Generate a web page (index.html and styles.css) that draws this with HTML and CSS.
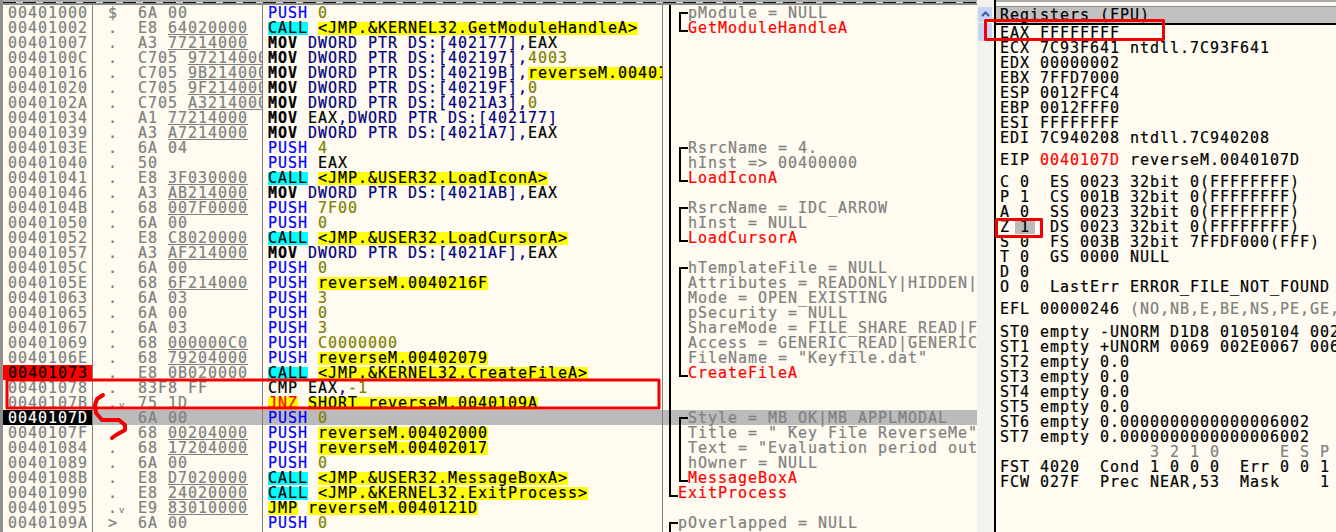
FILE: index.html
```html
<!DOCTYPE html>
<html lang="en">
  <head>
    <meta charset="utf-8" />
    <meta name="viewport" content="width=device-width, initial-scale=1.0" />
    <title>CPU - main thread</title>
    <link rel="stylesheet" href="styles.css">
  </head>
  <body>
    <div class="window">
      <section class="cpu">
        <div class="strip"></div>
        <div class="row"><div class="addr">00401000</div><div class="hex"><span class="mark">$</span>6A 00</div><div class="dis"><span class="push">PUSH</span> <span class="num">0</span></div><div class="note"><i class="g g-l"></i><i class="g g-t"></i><span>pModule = NULL</span></div></div>
        <div class="row"><div class="addr">00401002</div><div class="hex"><span class="mark">.</span>E8 <span class="ref">64020000</span></div><div class="dis"><span class="hl call">CALL</span> <span class="hl api">&lt;JMP.&amp;KERNEL32.GetModuleHandleA&gt;</span></div><div class="note"><i class="g g-l"></i><i class="g g-e"></i><span class="fn">GetModuleHandleA</span></div></div>
        <div class="row"><div class="addr">00401007</div><div class="hex"><span class="mark">.</span>A3 <span class="ref">77214000</span></div><div class="dis"><b>MOV</b> <span class="mem">DWORD PTR DS:[402177],</span>EAX</div><div class="note"><i class="g g-l"></i></div></div>
        <div class="row"><div class="addr">0040100C</div><div class="hex"><span class="mark">.</span>C705 <span class="ref">97214000</span></div><div class="dis"><b>MOV</b> <span class="mem">DWORD PTR DS:[402197],</span><span class="num">4003</span></div><div class="note"><i class="g g-l"></i></div></div>
        <div class="row"><div class="addr">00401016</div><div class="hex"><span class="mark">.</span>C705 <span class="ref">9B214000</span></div><div class="dis"><b>MOV</b> <span class="mem">DWORD PTR DS:[40219B],</span><span class="hl api">reverseM.00401046</span></div><div class="note"><i class="g g-l"></i></div></div>
        <div class="row"><div class="addr">00401020</div><div class="hex"><span class="mark">.</span>C705 <span class="ref">9F214000</span></div><div class="dis"><b>MOV</b> <span class="mem">DWORD PTR DS:[40219F],</span><span class="num">0</span></div><div class="note"><i class="g g-l"></i></div></div>
        <div class="row"><div class="addr">0040102A</div><div class="hex"><span class="mark">.</span>C705 <span class="ref">A3214000</span></div><div class="dis"><b>MOV</b> <span class="mem">DWORD PTR DS:[4021A3],</span><span class="num">0</span></div><div class="note"><i class="g g-l"></i></div></div>
        <div class="row"><div class="addr">00401034</div><div class="hex"><span class="mark">.</span>A1 <span class="ref">77214000</span></div><div class="dis"><b>MOV</b> EAX<span class="mem">,DWORD PTR DS:[402177]</span></div><div class="note"><i class="g g-l"></i></div></div>
        <div class="row"><div class="addr">00401039</div><div class="hex"><span class="mark">.</span>A3 <span class="ref">A7214000</span></div><div class="dis"><b>MOV</b> <span class="mem">DWORD PTR DS:[4021A7],</span>EAX</div><div class="note"><i class="g g-l"></i></div></div>
        <div class="row"><div class="addr">0040103E</div><div class="hex"><span class="mark">.</span>6A 04</div><div class="dis"><span class="push">PUSH</span> <span class="num">4</span></div><div class="note"><i class="g g-l"></i><i class="g g-t"></i><span>RsrcName = 4.</span></div></div>
        <div class="row"><div class="addr">00401040</div><div class="hex"><span class="mark">.</span>50</div><div class="dis"><span class="push">PUSH</span> EAX</div><div class="note"><i class="g g-l"></i><i class="g g-l"></i><span>hInst =&gt; 00400000</span></div></div>
        <div class="row"><div class="addr">00401041</div><div class="hex"><span class="mark">.</span>E8 <span class="ref">3F030000</span></div><div class="dis"><span class="hl call">CALL</span> <span class="hl api">&lt;JMP.&amp;USER32.LoadIconA&gt;</span></div><div class="note"><i class="g g-l"></i><i class="g g-e"></i><span class="fn">LoadIconA</span></div></div>
        <div class="row"><div class="addr">00401046</div><div class="hex"><span class="mark">.</span>A3 <span class="ref">AB214000</span></div><div class="dis"><b>MOV</b> <span class="mem">DWORD PTR DS:[4021AB],</span>EAX</div><div class="note"><i class="g g-l"></i></div></div>
        <div class="row"><div class="addr">0040104B</div><div class="hex"><span class="mark">.</span>68 <span class="ref">007F0000</span></div><div class="dis"><span class="push">PUSH</span> <span class="num">7F00</span></div><div class="note"><i class="g g-l"></i><i class="g g-t"></i><span>RsrcName = IDC_ARROW</span></div></div>
        <div class="row"><div class="addr">00401050</div><div class="hex"><span class="mark">.</span>6A 00</div><div class="dis"><span class="push">PUSH</span> <span class="num">0</span></div><div class="note"><i class="g g-l"></i><i class="g g-l"></i><span>hInst = NULL</span></div></div>
        <div class="row"><div class="addr">00401052</div><div class="hex"><span class="mark">.</span>E8 <span class="ref">C8020000</span></div><div class="dis"><span class="hl call">CALL</span> <span class="hl api">&lt;JMP.&amp;USER32.LoadCursorA&gt;</span></div><div class="note"><i class="g g-l"></i><i class="g g-e"></i><span class="fn">LoadCursorA</span></div></div>
        <div class="row"><div class="addr">00401057</div><div class="hex"><span class="mark">.</span>A3 <span class="ref">AF214000</span></div><div class="dis"><b>MOV</b> <span class="mem">DWORD PTR DS:[4021AF],</span>EAX</div><div class="note"><i class="g g-l"></i></div></div>
        <div class="row"><div class="addr">0040105C</div><div class="hex"><span class="mark">.</span>6A 00</div><div class="dis"><span class="push">PUSH</span> <span class="num">0</span></div><div class="note"><i class="g g-l"></i><i class="g g-t"></i><span>hTemplateFile = NULL</span></div></div>
        <div class="row"><div class="addr">0040105E</div><div class="hex"><span class="mark">.</span>68 <span class="ref">6F214000</span></div><div class="dis"><span class="push">PUSH</span> <span class="hl api">reverseM.0040216F</span></div><div class="note"><i class="g g-l"></i><i class="g g-l"></i><span>Attributes = READONLY|HIDDEN|SYSTEM</span></div></div>
        <div class="row"><div class="addr">00401063</div><div class="hex"><span class="mark">.</span>6A 03</div><div class="dis"><span class="push">PUSH</span> <span class="num">3</span></div><div class="note"><i class="g g-l"></i><i class="g g-l"></i><span>Mode = OPEN_EXISTING</span></div></div>
        <div class="row"><div class="addr">00401065</div><div class="hex"><span class="mark">.</span>6A 00</div><div class="dis"><span class="push">PUSH</span> <span class="num">0</span></div><div class="note"><i class="g g-l"></i><i class="g g-l"></i><span>pSecurity = NULL</span></div></div>
        <div class="row"><div class="addr">00401067</div><div class="hex"><span class="mark">.</span>6A 03</div><div class="dis"><span class="push">PUSH</span> <span class="num">3</span></div><div class="note"><i class="g g-l"></i><i class="g g-l"></i><span>ShareMode = FILE_SHARE_READ|FILE_SHARE_WRITE</span></div></div>
        <div class="row"><div class="addr">00401069</div><div class="hex"><span class="mark">.</span>68 <span class="ref">000000C0</span></div><div class="dis"><span class="push">PUSH</span> <span class="num">C0000000</span></div><div class="note"><i class="g g-l"></i><i class="g g-l"></i><span>Access = GENERIC_READ|GENERIC_WRITE</span></div></div>
        <div class="row"><div class="addr">0040106E</div><div class="hex"><span class="mark">.</span>68 <span class="ref">79204000</span></div><div class="dis"><span class="push">PUSH</span> <span class="hl api">reverseM.00402079</span></div><div class="note"><i class="g g-l"></i><i class="g g-l"></i><span>FileName = "Keyfile.dat"</span></div></div>
        <div class="row"><div class="addr addr-break">00401073</div><div class="hex"><span class="mark">.</span>E8 <span class="ref">0B020000</span></div><div class="dis"><span class="hl call">CALL</span> <span class="hl api">&lt;JMP.&amp;KERNEL32.CreateFileA&gt;</span></div><div class="note"><i class="g g-l"></i><i class="g g-e"></i><span class="fn">CreateFileA</span></div></div>
        <div class="row"><div class="addr">00401078</div><div class="hex"><span class="mark">.</span>83F8 FF</div><div class="dis">CMP EAX<span class="mem">,</span><span class="num">-1</span></div><div class="note"><i class="g g-l"></i></div></div>
        <div class="row"><div class="addr">0040107B</div><div class="hex"><span class="mark">.<small>v</small></span>75 1D</div><div class="dis"><span class="hl jump">JNZ</span> <span class="hl api">SHORT reverseM.0040109A</span></div><div class="note"><i class="g g-l"></i></div></div>
        <div class="row row-now"><div class="addr addr-now">0040107D</div><div class="hex"><span class="mark"></span>6A 00</div><div class="dis"><span class="push">PUSH</span> <span class="num">0</span></div><div class="note"><i class="g g-l"></i><i class="g g-t"></i><span>Style = MB_OK|MB_APPLMODAL</span></div></div>
        <div class="row"><div class="addr">0040107F</div><div class="hex"><span class="mark"></span>68 <span class="ref">00204000</span></div><div class="dis"><span class="push">PUSH</span> <span class="hl api">reverseM.00402000</span></div><div class="note"><i class="g g-l"></i><i class="g g-l"></i><span>Title = " Key File ReverseMe"</span></div></div>
        <div class="row"><div class="addr">00401084</div><div class="hex"><span class="mark">.</span>68 <span class="ref">17204000</span></div><div class="dis"><span class="push">PUSH</span> <span class="hl api">reverseM.00402017</span></div><div class="note"><i class="g g-l"></i><i class="g g-l"></i><span>Text = "Evaluation period out of date."</span></div></div>
        <div class="row"><div class="addr">00401089</div><div class="hex"><span class="mark">.</span>6A 00</div><div class="dis"><span class="push">PUSH</span> <span class="num">0</span></div><div class="note"><i class="g g-l"></i><i class="g g-l"></i><span>hOwner = NULL</span></div></div>
        <div class="row"><div class="addr">0040108B</div><div class="hex"><span class="mark">.</span>E8 <span class="ref">D7020000</span></div><div class="dis"><span class="hl call">CALL</span> <span class="hl api">&lt;JMP.&amp;USER32.MessageBoxA&gt;</span></div><div class="note"><i class="g g-l"></i><i class="g g-e"></i><span class="fn">MessageBoxA</span></div></div>
        <div class="row"><div class="addr">00401090</div><div class="hex"><span class="mark">.</span>E8 <span class="ref">24020000</span></div><div class="dis"><span class="hl call">CALL</span> <span class="hl api">&lt;JMP.&amp;KERNEL32.ExitProcess&gt;</span></div><div class="note"><i class="g g-e"></i><span class="fn">ExitProcess</span></div></div>
        <div class="row"><div class="addr">00401095</div><div class="hex"><span class="mark">.<small>v</small></span>E9 <span class="ref">83010000</span></div><div class="dis"><span class="hl jump-plain">JMP</span> <span class="hl api">reverseM.0040121D</span></div><div class="note"></div></div>
        <div class="row"><div class="addr">0040109A</div><div class="hex"><span class="mark">&gt;</span>6A 00</div><div class="dis"><span class="push">PUSH</span> <span class="num">0</span></div><div class="note"><i class="g g-t"></i><span>pOverlapped = NULL</span></div></div>
        <!-- next row is cut off by the window, only its top edge shows -->
        <div class="row"><div class="addr"></div><div class="hex"></div><div class="dis"><span class="spacer"></span><span class="hl api stub"></span></div><div class="note"><i class="g g-l"></i></div></div>
      </section>

      <div class="scrollbar">
        <div class="scroll-btn">
          <svg width="15" height="15" viewBox="0 0 15 15"><path d="M4 9 L7.5 5.5 L11 9" fill="none" stroke="#3d5a9e" stroke-width="2" /></svg>
        </div>
        <div class="scroll-thumb"></div>
      </div>

      <section class="regs">
        <div class="regs-strip"></div>
        <h2 class="regs-head">Registers (FPU)</h2>
        <div class="group">
          <div class="line">EAX FFFFFFFF</div>
          <div class="line">ECX 7C93F641 ntdll.7C93F641</div>
          <div class="line">EDX 00000002</div>
          <div class="line">EBX 7FFD7000</div>
          <div class="line">ESP 0012FFC4</div>
          <div class="line">EBP 0012FFF0</div>
          <div class="line">ESI FFFFFFFF</div>
          <div class="line">EDI 7C940208 ntdll.7C940208</div>
        </div>
        <div class="group">
          <div class="line">EIP <span class="changed">0040107D</span> reverseM.0040107D</div>
        </div>
        <div class="group">
          <div class="line">C 0  ES 0023 32bit 0(FFFFFFFF)</div>
          <div class="line">P 1  CS 001B 32bit 0(FFFFFFFF)</div>
          <div class="line">A 0  SS 0023 32bit 0(FFFFFFFF)</div>
          <div class="line">Z <span class="flag-on">1</span>  DS 0023 32bit 0(FFFFFFFF)</div>
          <div class="line">S 0  FS 003B 32bit 7FFDF000(FFF)</div>
          <div class="line">T 0  GS 0000 NULL</div>
          <div class="line">D 0</div>
          <div class="line">O 0  LastErr ERROR_FILE_NOT_FOUND</div>
        </div>
        <div class="group">
          <div class="line">EFL 00000246 <span class="dim">(NO,NB,E,BE,NS,PE,GE,</span></div>
        </div>
        <div class="group group-last">
          <div class="line">ST0 empty -UNORM D1D8 01050104 002</div>
          <div class="line">ST1 empty +UNORM 0069 002E0067 006</div>
          <div class="line">ST2 empty 0.0</div>
          <div class="line">ST3 empty 0.0</div>
          <div class="line">ST4 empty 0.0</div>
          <div class="line">ST5 empty 0.0</div>
          <div class="line">ST6 empty 0.0000000000000006002</div>
          <div class="line">ST7 empty 0.0000000000000006002</div>
          <div class="line dim">               3 2 1 0      E S P</div>
          <div class="line">FST 4020  Cond 1 0 0 0  Err 0 0 1</div>
          <div class="line">FCW 027F  Prec NEAR,53  Mask    1</div>
        </div>
      </section>

      <!-- red marks drawn on top of the screenshot -->
      <svg class="marks" width="1336" height="532" viewBox="0 0 1336 532">
        <rect x="985.5" y="20.5" width="178" height="19" />
        <rect x="996.5" y="219.5" width="45" height="17" />
        <rect x="7" y="380" width="652" height="28" />
        <path class="scribble" d="M103 395 L97 399 L95 405 L96 413 L102 420 L119 420 L125 425 L125 430 L116 435 L112 438" />
      </svg>
    </div>
  </body>
</html>
```

FILE: styles.css
```css
/* General Reset */
* {
  margin: 0;
  padding: 0;
  box-sizing: border-box;
}

html, body {
  height: 100%;
  overflow: hidden;
  background-color: #fffbf0;
}

.window {
  position: relative;
  display: flex;
  width: 1336px;
  height: 532px;
  overflow: hidden;
  font-family: "DejaVu Sans Mono", monospace;
  font-size: 15px;
  letter-spacing: 0.97px;
  line-height: 17px;
  color: #000;
  -webkit-text-stroke: 0.2px;
}

/* Disassembly pane */
.cpu {
  width: 977px;
  border-left: 3px solid #909090;
  flex: none;
}

.strip {
  height: 5px;
  border-top: 2px solid #aaa;
  border-bottom: 2px solid #8c8c8c;
  background: repeating-linear-gradient(90deg, #111 0, #111 13px, #d8d8d8 13px, #d8d8d8 20px);
}

.row {
  display: flex;
  height: 15px;
  white-space: pre;
}

.addr {
  width: 90px;
  padding-left: 5px;
  color: #808080;
  border-right: 1px solid #808080;
  flex: none;
}

.addr-break {
  background-color: #ff0000;
  color: #000;
}

.addr-now {
  background-color: #000;
  color: #fff;
}

.hex {
  width: 170px;
  padding-left: 15px;
  color: #808080;
  border-right: 1px solid #808080;
  overflow-x: clip;
  flex: none;
}

.mark {
  display: inline-block;
  width: 30px;
  height: 15px;
  vertical-align: top;
}

.mark small {
  font-size: 9px;
  letter-spacing: 0;
  margin-left: 1px;
}

.ref {
  display: inline-block;
  height: 15px;
  line-height: 16px;
  border-bottom: 1px solid #808080;
  vertical-align: top;
}

.dis {
  width: 400px;
  padding-left: 5px;
  border-right: 1px solid #808080;
  overflow-x: clip;
  flex: none;
}

.dis b {
  font-weight: bold;
}

.push {
  color: #0000ff;
}

.num {
  color: #808000;
}

.mem {
  color: #000080;
}

.hl {
  display: inline-block;
  height: 13px;
  margin-top: 2px;
  line-height: 13px;
  vertical-align: top;
}

.call {
  background-color: #00ffff;
}

.api {
  background-color: #ffff00;
}

.jump {
  background-color: #ffff00;
  color: #ff0000;
}

.jump-plain {
  background-color: #ffff00;
}

.spacer {
  display: inline-block;
  width: 50px;
}

.stub {
  width: 170px;
}

/* Comment column, with the call brackets */
.note {
  display: flex;
  align-items: flex-start;
  flex: 1;
  min-width: 0;
  padding-left: 5px;
  color: #808080;
  overflow-x: clip;
}

.g {
  flex: none;
  width: 9px;
  height: 15px;
  margin-left: 1px;
}

.g-l {
  border-left: 2px solid #000;
}

.g-t {
  height: 8px;
  margin-top: 7px;
  border-left: 2px solid #000;
  border-top: 2px solid #000;
}

.g-e {
  height: 12px;
  border-left: 2px solid #000;
  border-bottom: 2px solid #000;
}

.fn {
  color: #ff0000;
}

.row-now .hex,
.row-now .dis,
.row-now .note {
  background-color: #bbbbbb;
}

/* Scrollbar */
.scrollbar {
  flex: none;
  width: 17px;
  padding: 7px 2px 0 1px;
  background-color: #f3f3ee;
}

.scroll-btn {
  height: 15px;
  background-color: #c5d3f5;
  border-radius: 2px;
}

.scroll-thumb {
  height: 18px;
  margin-top: 1px;
  background-color: #c5d3f5;
  border-radius: 2px;
}

/* Registers pane */
.regs {
  flex: 1;
  min-width: 0;
  border-left: 2px solid #000;
  overflow: hidden;
}

.regs-strip {
  height: 7px;
  border-top: 2px solid #aaa;
  border-bottom: 1px solid #8c8c8c;
}

.regs-head {
  height: 18px;
  padding-left: 4px;
  background-color: #c0c0c0;
  border-bottom: 2px solid #000;
  font-size: inherit;
  font-weight: normal;
  white-space: pre;
}

.group {
  margin-bottom: 7px;
  padding-left: 4px;
}

.group-last {
  margin-top: 8px;
}

.line {
  height: 15px;
  white-space: pre;
}

.changed {
  color: #ff0000;
}

.dim {
  color: #808080;
}

.flag-on {
  display: inline-block;
  width: 20px;
  height: 15px;
  margin-left: -5px;
  padding-left: 5px;
  margin-right: -5px;
  background-color: #bbbbbb;
  vertical-align: top;
}

.marks {
  position: absolute;
  top: 0;
  left: 0;
  fill: none;
  stroke: #f00000;
  stroke-width: 3;
  stroke-linejoin: round;
  stroke-linecap: round;
}

.marks .scribble {
  stroke-width: 4;
}
```
